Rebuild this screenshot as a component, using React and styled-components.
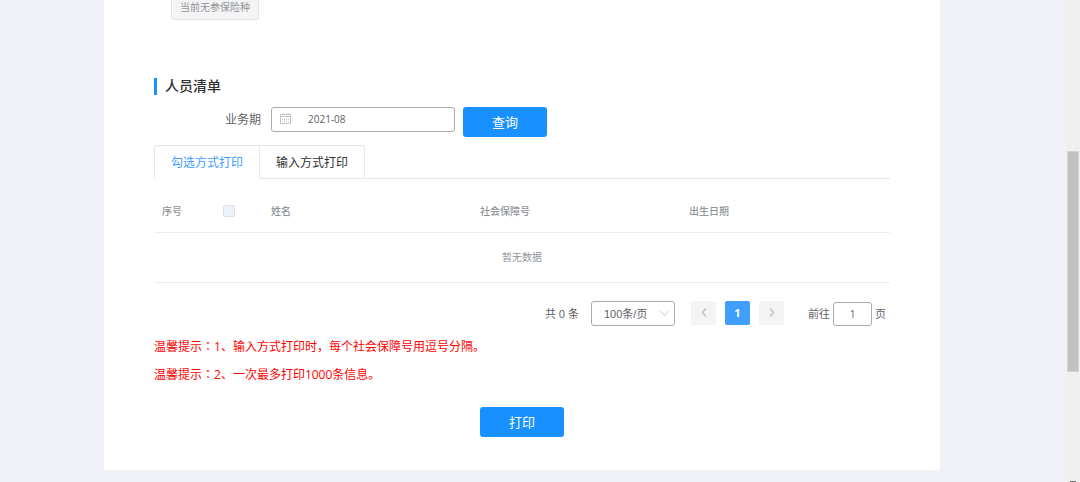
import { useState } from "react";
import styled, { createGlobalStyle } from "styled-components";

const GlobalStyle = createGlobalStyle`
    * {
        box-sizing: border-box;
    }

    body {
        margin: 0;
        background: #f0f1f6;
        color: #606266;
        font-family: "Open Sans", "Noto Sans CJK SC", sans-serif;
        font-size: 12px;
    }

    button,
    input,
    select {
        margin: 0;
        font-family: inherit;
    }
`;

const Page = styled.div`
    display: flex;
    min-height: 100vh;
`;

const Main = styled.main`
    flex: 1;
    padding: 0 127px 12px 104px;
`;

const ScrollTrack = styled.div`
    display: flex;
    flex-direction: column;
    width: 13px;
    padding-top: 151px;
    background: #f0f0f0;
`;

const ScrollThumb = styled.div`
    width: 12px;
    height: 221px;
    border: 1px solid #d4d4d4;
    background: #c1c1c1;
`;

const ScrollArrow = styled.div`
    width: 6px;
    height: 1px;
    margin: auto 0 0 3px;
    background: #6e6e6e;
`;

const Card = styled.div`
    padding: 0 50px 33px;
    background: #fff;
`;

const InsuranceTag = styled.button`
    display: block;
    height: 20px;
    margin-left: 17px;
    padding: 0 8px 6px;
    border: 1px solid #e4e4e6;
    border-top: 0;
    border-radius: 0 0 3px 3px;
    background: #f4f4f5;
    color: #909399;
    font-size: 10px;
    line-height: 12px;
`;

const Title = styled.h2`
    margin: 58px 0 12px;
    padding: 0 0 2px 8px;
    border-left: 3px solid #1890ff;
    color: #303133;
    font-size: 14px;
    font-weight: 500;
    line-height: 15px;
`;

const SearchForm = styled.form`
    display: flex;
    align-items: flex-start;
    margin-bottom: 8px;
    padding-left: 71px;
`;

const Label = styled.label`
    margin-right: 10px;
    line-height: 26px;
`;

const DateField = styled.div`
    position: relative;
    width: 184px;
    margin-right: 8px;

    svg {
        position: absolute;
        top: 6px;
        left: 9px;
    }
`;

const DateInput = styled.input`
    display: block;
    width: 100%;
    height: 25px;
    padding: 0 10px 2px 36px;
    border: 1px solid #aaabad;
    border-radius: 3px;
    background: #fff;
    color: #606266;
    font-size: 10px;
`;

const PrimaryButton = styled.button`
    display: block;
    width: 84px;
    height: 30px;
    padding: 0;
    border: 0;
    border-radius: 3px;
    background: #1890ff;
    color: #fff;
    font-size: 13px;
    line-height: 30px;
`;

const TabBar = styled.div`
    display: flex;
    height: 34px;
    border-bottom: 1px solid #e4e7ed;
`;

const Tab = styled.button`
    height: ${(props) => (props.$active ? 34 : 33)}px;
    padding: ${(props) => (props.$active ? 0 : 1)}px 16px 0;
    border: 1px solid #e4e7ed;
    border-width: 1px 0 0 1px;
    background: #fff;
    color: ${(props) => (props.$active ? "#409eff" : "#303133")};
    font-size: 12px;
    line-height: ${(props) => (props.$active ? 32 : 31)}px;

    &:first-child {
        border-top-left-radius: 3px;
    }

    &:last-child {
        border-right-width: 1px;
        border-top-right-radius: 3px;
    }
`;

const Table = styled.table`
    width: 100%;
    margin-top: 12px;
    border-collapse: collapse;
    table-layout: fixed;
    color: #909399;
    font-size: 10px;
    line-height: 16px;
`;

const HeadCell = styled.th`
    width: ${(props) => props.$width || "auto"};
    height: 41px;
    padding: 0 8px;
    border-bottom: 1px solid #ebeef5;
    font-weight: 500;
    text-align: left;
`;

const EmptyCell = styled.td`
    height: 50px;
    padding: 0;
    border-bottom: 1px solid #ebeef5;
    text-align: center;
`;

const Checkbox = styled.input`
    display: block;
    width: 12px;
    height: 12px;
    border: 1px solid #dcdfe6;
    border-radius: 2px;
    background: #edf2fc;
    appearance: none;
`;

const Pagination = styled.div`
    display: flex;
    align-items: center;
    justify-content: flex-end;
    height: 25px;
    margin-top: 18px;
    padding-right: 4px;
    font-size: 11px;
`;

const SizeField = styled.div`
    position: relative;
    margin: 0 16px 0 12px;

    svg {
        position: absolute;
        top: 9px;
        right: 6px;
        pointer-events: none;
    }
`;

const SizeSelect = styled.select`
    display: block;
    width: 84px;
    height: 25px;
    padding: 2px 20px 0 12px;
    border: 1px solid #aaabad;
    border-radius: 3px;
    background: #fff;
    color: #606266;
    font-family: "Liberation Sans", "Noto Sans CJK SC", sans-serif;
    font-size: 11px;
    appearance: none;
`;

const Pager = styled.div`
    display: flex;
    align-self: flex-start;
    gap: 9px;
    margin-right: 24px;
`;

const PageButton = styled.button`
    display: flex;
    align-items: center;
    justify-content: center;
    width: 25px;
    height: 24px;
    padding: 0;
    border: 0;
    border-radius: 2px;
    background: ${(props) => (props.$active ? "#409eff" : "#f4f4f5")};
    color: ${(props) => (props.$active ? "#fff" : "#c0c4cc")};
    font-size: 11px;
    font-weight: 700;
`;

const JumpInput = styled.input`
    align-self: flex-end;
    width: 39px;
    height: 24px;
    margin: 0 3px;
    padding: 0;
    border: 1px solid #aaabad;
    border-radius: 3px;
    color: #606266;
    font-size: 10px;
    text-align: center;
`;

const Tips = styled.div`
    margin: 7px 0 18px;
    color: #ff0000;
    line-height: 28px;

    p {
        margin: 0;
    }
`;

// the JP face centres the full-width colon
const Colon = styled.span`
    font-family: "Noto Sans CJK JP", sans-serif;
    line-height: 1;
`;

const Actions = styled.div`
    display: flex;
    justify-content: center;
`;

const CalendarIcon = () => (
    <svg width="11" height="11" viewBox="0 0 11 11" fill="none" stroke="#c0c4cc">
        <path d="M0.5 1.5h10v9h-10zM0.5 3.5h10M3 0v2M8 0v2" />
        <path d="M2 6.5h7M2 8.5h7" strokeDasharray="1 1" />
    </svg>
);

const Chevron = ({ d, width, height, color, weight = 1 }) => (
    <svg
        width={width}
        height={height}
        viewBox={`0 0 ${width} ${height}`}
        fill="none"
        stroke={color}
        strokeWidth={weight}
    >
        <path d={d} strokeLinecap="round" strokeLinejoin="round" />
    </svg>
);

const tabs = ["勾选方式打印", "输入方式打印"];

const tips = [
    "1、输入方式打印时，每个社会保障号用逗号分隔。",
    "2、一次最多打印1000条信息。",
];

export default function App() {
    const [activeTab, setActiveTab] = useState(0);
    const [period, setPeriod] = useState("2021-08");
    const [page, setPage] = useState("1");

    return (
        <Page>
            <GlobalStyle />
            <Main>
                <Card>
                    <InsuranceTag type="button" disabled>
                        当前无参保险种
                    </InsuranceTag>

                    <Title>人员清单</Title>
                    <SearchForm onSubmit={(e) => e.preventDefault()}>
                        <Label htmlFor="period">业务期</Label>
                        <DateField>
                            <DateInput
                                id="period"
                                value={period}
                                onChange={(e) => setPeriod(e.target.value)}
                            />
                            <CalendarIcon />
                        </DateField>
                        <PrimaryButton type="submit">查询</PrimaryButton>
                    </SearchForm>

                    <TabBar role="tablist">
                        {tabs.map((tab, index) => (
                            <Tab
                                key={tab}
                                type="button"
                                role="tab"
                                aria-selected={index === activeTab}
                                $active={index === activeTab}
                                onClick={() => setActiveTab(index)}
                            >
                                {tab}
                            </Tab>
                        ))}
                    </TabBar>

                    <Table>
                        <thead>
                            <tr>
                                <HeadCell $width="61px">序号</HeadCell>
                                <HeadCell $width="48px">
                                    <Checkbox type="checkbox" aria-label="全选" disabled />
                                </HeadCell>
                                <HeadCell>姓名</HeadCell>
                                <HeadCell>社会保障号</HeadCell>
                                <HeadCell>出生日期</HeadCell>
                            </tr>
                        </thead>
                        <tbody>
                            <tr>
                                <EmptyCell colSpan={5}>暂无数据</EmptyCell>
                            </tr>
                        </tbody>
                    </Table>

                    <Pagination>
                        <span>共 0 条</span>
                        <SizeField>
                            <SizeSelect aria-label="每页条数" defaultValue="100">
                                <option value="100">100条/页</option>
                            </SizeSelect>
                            <Chevron d="M1 1.5l3.5 4L8 1.5" width={9} height={8} color="#c0c4cc" />
                        </SizeField>
                        <Pager>
                            <PageButton type="button" aria-label="上一页" disabled>
                                <Chevron
                                    d="M4.5 1L1.5 4.5l3 3.5"
                                    width={6}
                                    height={9}
                                    color="currentColor"
                                    weight={1.6}
                                />
                            </PageButton>
                            <PageButton type="button" $active>
                                1
                            </PageButton>
                            <PageButton type="button" aria-label="下一页" disabled>
                                <Chevron
                                    d="M1.5 1l3 3.5-3 3.5"
                                    width={6}
                                    height={9}
                                    color="currentColor"
                                    weight={1.6}
                                />
                            </PageButton>
                        </Pager>
                        <label htmlFor="jump">前往</label>
                        <JumpInput
                            id="jump"
                            value={page}
                            onChange={(e) => setPage(e.target.value)}
                        />
                        <span>页</span>
                    </Pagination>

                    <Tips>
                        {tips.map((tip) => (
                            <p key={tip}>
                                温馨提示<Colon>：</Colon>
                                {tip}
                            </p>
                        ))}
                    </Tips>

                    <Actions>
                        <PrimaryButton type="button">打印</PrimaryButton>
                    </Actions>
                </Card>
            </Main>
            <ScrollTrack>
                <ScrollThumb />
                <ScrollArrow />
            </ScrollTrack>
        </Page>
    );
}
